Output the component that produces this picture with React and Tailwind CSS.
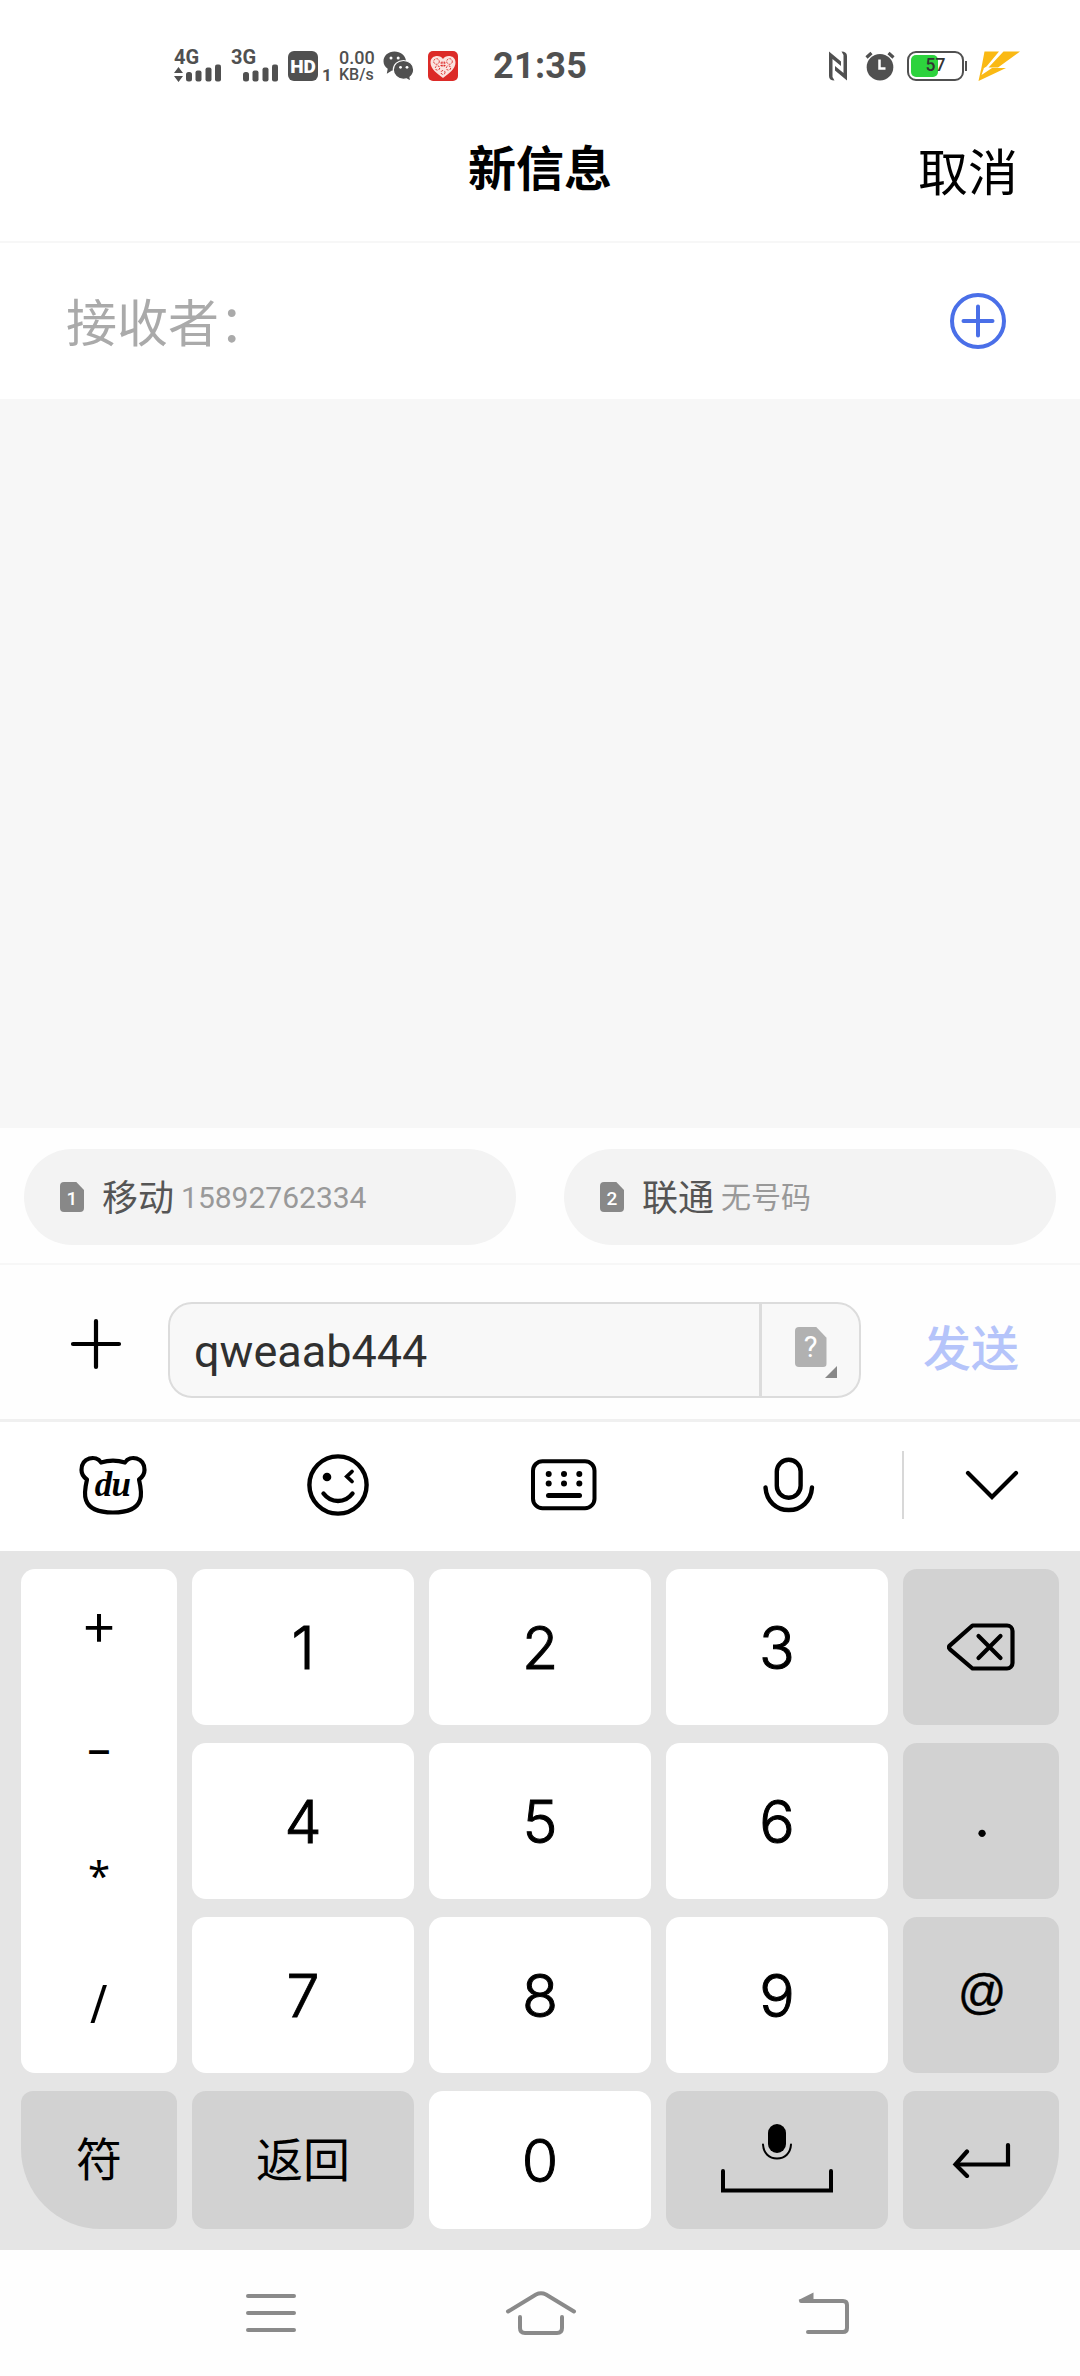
import { useState } from 'react';
import clsx from 'clsx';

function SignalBars() {
  return (
    <svg width="36" height="18" viewBox="0 0 36 18" fill="#505050">
      <rect x="0" y="8" width="6" height="9.5" rx="2.5" />
      <rect x="9.5" y="6.5" width="6" height="11" rx="2" />
      <rect x="19.5" y="3.5" width="6" height="14" rx="2" />
      <rect x="29" y="0.5" width="6" height="17" rx="2" />
    </svg>
  );
}

function DataArrows() {
  return (
    <svg width="9" height="15" viewBox="0 0 9 15" fill="#505050">
      <path d="M4.5 0 9 6H0zM4.5 15 0 9h9z" />
    </svg>
  );
}

function WechatIcon() {
  return (
    <svg width="31" height="31" viewBox="0 0 31 31">
      <path d="M11.5.5C5.200.5.5 4.800.5 10.200c0 3.200 1.600 5.800 4.200 7.600L3.800 22.800l5.200-3.200h3.500L23 9.500C22 4 17.500.5 11.500.5z" fill="#505050" />
      <circle cx="8" cy="7" r="1.500" fill="#fff" />
      <circle cx="15.200" cy="7" r="1.500" fill="#fff" />
      <path d="M20.500 9.500c5.700 0 10.200 4 10.200 9.300 0 3-1.500 5.600-3.700 7.300l.7 4.200-4.200-2.400c-1 .3-2 .4-3 .4-5.700 0-10.200-4.200-10.200-9.500s4.500-9.300 10.200-9.300z" fill="#505050" stroke="#fff" strokeWidth="1.200" />
      <circle cx="17.500" cy="16.300" r="1.400" fill="#fff" />
      <circle cx="24" cy="16.300" r="1.400" fill="#fff" />
    </svg>
  );
}

function HeartAppIcon() {
  return (
    <svg width="30" height="30" viewBox="0 0 30 30">
      <rect width="30" height="30" rx="5" fill="#dc2b28" />
      <path d="M15 8C12.500 3.500 2.500 4 2.500 11.500 2.500 18 9 22.500 15 27 21 22.500 27.500 18 27.500 11.500 27.500 4 17.500 3.500 15 8z" fill="#fbe3df" />
      <g fill="none" stroke="#dc2b28" strokeWidth="1" strokeDasharray="2 1.200">
        <circle cx="8.500" cy="10.500" r="2.800" />
        <circle cx="21.500" cy="10.500" r="2.800" />
        <circle cx="9.500" cy="17" r="2.200" />
        <circle cx="20.500" cy="17" r="2.200" />
        <circle cx="15" cy="21.500" r="2" />
        <path d="M12.500 12h5M12.500 14.500h5M14 10.500v5.500M16.200 10.500v5.500" />
      </g>
    </svg>
  );
}

function NfcIcon() {
  return (
    <svg width="18" height="30" viewBox="0 0 18 30" fill="#505050">
      <path d="M0 .5 12 10.500v4.500L3.500 8v18L5.500 29.500C2 29.500 0 28 0 25zM18 29.500 6 19.500V15l8.500 7V4L12.500.5C16 .5 18 2 18 5z" />
    </svg>
  );
}

function AlarmIcon() {
  return (
    <svg width="30" height="30" viewBox="0 0 30 30">
      <circle cx="15" cy="16.200" r="13.300" fill="#505050" />
      <path d="M1.500 6.500 6.500 2M28.500 6.500 23.500 2" stroke="#505050" strokeWidth="3.200" />
      <path d="M14.500 8.500v9h6" fill="none" stroke="#fff" strokeWidth="2.500" />
    </svg>
  );
}

function BoltIcon() {
  return (
    <svg width="43" height="31" viewBox="0 0 43 31" fill="#fab914">
      <path d="M6.500.5H21L8.500 15.500 3 19zM25.500.5H42L20 16.500H10.500z" />
      <path d="M3 18.500 6 17 3.500 24 14 17H28L.5 30z" />
    </svg>
  );
}

function SimIcon({ label, large }) {
  return (
    <div
      className={clsx(
        'flex items-center justify-center text-white [clip-path:polygon(0_0,68%_0,100%_27%,100%_100%,0_100%)]',
        large ? 'h-10 w-8 rounded bg-[#b1b1b1] text-[29px]' : 'h-[30px] w-6 rounded bg-[#888] text-[19px] font-medium'
      )}
    >
      <span className="pt-0.5">{label}</span>
    </div>
  );
}

function StatusBar() {
  return (
    <div className="flex h-[132px] items-center pl-[174px] leading-none text-[#505050]">
      <div className="h-8 w-[57px]">
        <div className="h-[17px] text-[20px] leading-[14px] font-bold">4G</div>
        <div className="-mt-[3px] flex items-end gap-[3px]">
          <DataArrows />
          <SignalBars />
        </div>
      </div>
      <div className="h-8 w-[57px]">
        <div className="h-[17px] text-[20px] leading-[14px] font-bold">3G</div>
        <div className="-mt-[3px] pl-3">
          <SignalBars />
        </div>
      </div>
      <div className="flex h-[30px] w-[30px] items-center justify-center rounded-md bg-[#505050] text-[19px] font-black text-white">
        HD
      </div>
      <span className="mt-[18px] ml-[4px] w-[17px] text-[17px] font-bold">1</span>
      <div className="w-[44px] font-medium">
        <div className="text-[18px] leading-[17px]">0.00</div>
        <div className="text-[16px] leading-[17px]">KB/s</div>
      </div>
      <WechatIcon />
      <div className="ml-3.5">
        <HeartAppIcon />
      </div>
      <span className="ml-[35px] text-[36px] font-bold tracking-[0.3px]">21:35</span>
      <div className="ml-auto flex items-center pr-[59px]">
        <NfcIcon />
        <div className="ml-[18px]">
          <AlarmIcon />
        </div>
        <div className="ml-3 flex items-center">
          <div className="relative h-[30px] w-[57px] rounded-[9px] border-2 border-[#505050] p-0.5">
            <div className="h-full w-[27px] rounded-[5px] bg-[#2dd33d]" />
            <span className="absolute inset-0 flex items-center justify-center text-[17.5px] font-medium text-[#333]">57</span>
          </div>
          <div className="ml-px h-2.5 w-0.5 bg-[#505050]" />
        </div>
        <div className="ml-[11px]">
          <BoltIcon />
        </div>
      </div>
    </div>
  );
}

function BearIcon() {
  return (
    <div className="relative">
      <svg width="68" height="60" viewBox="0 0 68 60" fill="none" stroke="#000" strokeWidth="4.200" strokeLinejoin="round">
        <path d="M22 7.500C17-.5 2.500 2.500 2.500 15c0 4.500 2.500 7.500 5.500 9.500C6 33 5.500 41 7 45c3 9 14 12.500 27 12.500S58 54 61 45c1.500-4 1-12-1-20.500 3-2 5.500-5 5.500-9.500C65.500 2.500 51 -.5 46 7.500c-8-2.600-16-2.600-24 0z" />
      </svg>
      <span className="absolute top-[12px] left-[16px] font-['Liberation_Serif',serif] text-[35px] leading-none font-bold italic tracking-tight">
        du
      </span>
    </div>
  );
}

function WinkIcon() {
  return (
    <svg width="62" height="62" viewBox="0 0 62 62" fill="none" stroke="#000" strokeWidth="4.400" strokeLinecap="round">
      <circle cx="31" cy="31" r="28.600" />
      <circle cx="20" cy="23" r="4.300" fill="#000" stroke="none" />
      <path d="M45 17.500 39.800 22.500 45 27.500" strokeWidth="3.800" />
      <path d="M16.500 39.500c7.500 10 21.500 10 29 0" />
    </svg>
  );
}

function KeyboardIcon() {
  return (
    <svg width="66" height="52" viewBox="0 0 66 52" fill="#000">
      <rect x="2" y="2.200" width="61.500" height="47" rx="9.500" fill="none" stroke="#000" strokeWidth="4" />
      {[17.700, 33, 48.300].map((x) => (
        <g key={x}>
          <circle cx={x} cy="15" r="3" />
          <circle cx={x} cy="24.500" r="3" />
        </g>
      ))}
      <rect x="15" y="34" width="36" height="5" rx="2.500" />
    </svg>
  );
}

function MicIcon() {
  return (
    <svg width="52" height="56" viewBox="0 0 52 56" fill="none" stroke="#000" strokeWidth="4.400" strokeLinecap="round">
      <rect x="13.800" y="2.700" width="23.800" height="38" rx="11.900" />
      <path d="M2.500 30.500C3.500 44 13 53 25.800 53S48 44 49 30.500" />
    </svg>
  );
}

function BackspaceIcon() {
  return (
    <svg width="68" height="48" viewBox="0 0 68 48" fill="none" stroke="#000" strokeWidth="4.200" strokeLinejoin="round" strokeLinecap="round">
      <path d="M25.500 2.500H60a5.500 5.500 0 0 1 5.500 5.500v32a5.500 5.500 0 0 1-5.500 5.500H25.500L3 26.300q-2-2 0-4z" />
      <path d="M31.500 13 53.500 35M53.500 13 31.500 35" />
    </svg>
  );
}

function SpaceIcon() {
  return (
    <svg width="114" height="70" viewBox="0 0 114 70" fill="none" stroke="#000" className="mb-[3px]">
      <rect x="48" y="0" width="18" height="29" rx="9" fill="#000" stroke="none" />
      <path d="M43 20.500C43.500 29 49 34.500 57 34.500S70.500 29 71 20.500" strokeWidth="2" strokeLinecap="round" />
      <path d="M3 47v19.500h108V47" strokeWidth="4" strokeLinecap="round" />
    </svg>
  );
}

function EnterIcon() {
  return (
    <svg width="60" height="36" viewBox="0 0 60 36" fill="none" stroke="#000" strokeWidth="4.200" strokeLinecap="round" className="ml-0.5">
      <path d="M56 3v19.500H4" />
      <path d="M15 9.500 3.500 22.500 15 34" />
    </svg>
  );
}

function Key({ children, gray, className }) {
  return (
    <button
      className={clsx(
        'flex items-center justify-center text-black',
        gray ? 'bg-[#d2d2d2]' : 'bg-white',
        className || 'rounded-[14px]'
      )}
    >
      {children}
    </button>
  );
}

function Digit({ value }) {
  return (
    <Key>
      <span className="font-['Inter',sans-serif] text-[59px] leading-none font-light [-webkit-text-stroke:1px_#000]">{value}</span>
    </Key>
  );
}

function Keypad() {
  return (
    <div className="grid h-[699px] grid-cols-[156px_222px_222px_222px_156px] grid-rows-[156px_156px_156px_138px] gap-x-[15px] gap-y-[18px] bg-[#e5e5e5] px-[21px] pt-[18px]">
      <div className="row-span-3 flex flex-col items-center rounded-[14px] bg-white pt-7 font-['Noto_Sans',sans-serif] leading-none">
        <span className="font-['Noto_Sans_CJK_SC',sans-serif] text-[55px] leading-none">+</span>
        <span className="mt-[72px] text-[47px] leading-none">–</span>
        <span className="mt-[84px] text-[40px] leading-none">*</span>
        <span className="mt-[82px] scale-x-90 text-[52px] leading-none">/</span>
      </div>
      <Digit value="1" />
      <Digit value="2" />
      <Digit value="3" />
      <Key gray>
        <BackspaceIcon />
      </Key>
      <Digit value="4" />
      <Digit value="5" />
      <Digit value="6" />
      <Key gray>
        <span className="pb-2 pl-0.5 font-['Inter',sans-serif] text-[56px] leading-none">.</span>
      </Key>
      <Digit value="7" />
      <Digit value="8" />
      <Digit value="9" />
      <Key gray>
        <span className="pb-[7px] pl-0.5 font-['Liberation_Sans',sans-serif] text-[48px] leading-none [-webkit-text-stroke:0.4px_#000]">@</span>
      </Key>
      <Key gray className="rounded-[12px] rounded-bl-[80px]">
        <span className="text-[46px] leading-none">符</span>
      </Key>
      <Key gray>
        <span className="text-[47px] leading-none">返回</span>
      </Key>
      <Digit value="0" />
      <Key gray>
        <SpaceIcon />
      </Key>
      <Key gray className="rounded-[12px] rounded-br-[80px]">
        <EnterIcon />
      </Key>
    </div>
  );
}

function NavBar() {
  return (
    <div className="flex h-[126px] items-center bg-[#fefefe] pl-[246px] text-[#8a8a8a]">
      <svg width="50" height="40" viewBox="0 0 50 40" stroke="currentColor" strokeWidth="4" strokeLinecap="round">
        <path d="M2 3h46M2 20h46M2 37h46" />
      </svg>
      <svg width="72" height="44" viewBox="0 0 72 44" fill="none" stroke="currentColor" strokeWidth="4" strokeLinecap="round" className="ml-[209px]">
        <path d="M3 20.500 31 3.500q5-2.500 10 0l28 17" />
        <path d="M15 26v11q0 5 5 5h32q5 0 5-5V26" />
      </svg>
      <svg width="52" height="42" viewBox="0 0 52 42" fill="none" stroke="currentColor" strokeWidth="4" strokeLinecap="round" className="ml-[221px]">
        <path d="M3 9h42q4 0 4 4v23q0 4-4 4H10" />
        <path d="M.5 8 15.500.5V9H2z" fill="currentColor" stroke="none" />
      </svg>
    </div>
  );
}

const sims = [
  { slot: '1', carrier: '移动', number: '15892762334' },
  { slot: '2', carrier: '联通', number: '无号码' },
];

export default function App() {
  const [message, setMessage] = useState('qweaab444');

  return (
    <div className="flex h-[2376px] w-[1080px] flex-col overflow-hidden bg-white font-['Roboto','Noto_Sans_CJK_SC',sans-serif]">
      <StatusBar />

      {/* Title */}
      <div className="grid h-[111px] grid-cols-3 border-b-2 border-[#f7f7f7] px-[62px] text-black">
        <h1 className="col-start-2 pt-[14px] text-center text-[48px] leading-[48px] font-bold">新信息</h1>
        <button className="self-start pt-[17px] text-right text-[50px] leading-[50px]">取消</button>
      </div>

      {/* Recipient */}
      <div className="flex h-[156px] items-center justify-between pr-[73px] pl-[66px]">
        <span className="pt-1.5 text-[51px] leading-none text-[#aaa]">接收者：</span>
        <svg width="58" height="58" viewBox="0 0 58 58" fill="none" stroke="#4a6fe8" strokeWidth="4" strokeLinecap="round">
          <circle cx="29" cy="29" r="26" />
          <path d="M14.500 29h29M29 14.500v29" />
        </svg>
      </div>

      <div className="h-[729px] bg-[#f7f7f7]" />

      {/* SIM choice */}
      <div className="flex h-[137px] gap-12 border-b-2 border-[#f7f7f7] bg-[#fefefe] px-6 pt-[21px]">
        {sims.map((sim) => (
          <button key={sim.slot} className="flex h-24 flex-1 items-center rounded-full bg-[#f3f3f3] pl-9 leading-none">
            <SimIcon label={sim.slot} />
            <span className="ml-[18px] pt-1 text-[36px] text-[#555]">{sim.carrier}</span>
            <span className="ml-[7px] pt-0.5 text-[30px] text-[#999]">{sim.number}</span>
          </button>
        ))}
      </div>

      {/* Compose */}
      <div className="flex h-[157px] border-b-[3px] border-[#f0f0f0] bg-[#fefefe] pt-[37px] pl-[70px]">
        <svg width="52" height="52" viewBox="0 0 52 52" stroke="#000" strokeWidth="4.200" strokeLinecap="round" className="mt-4">
          <path d="M3 26h46M26 3v46" />
        </svg>
        <div className="ml-[46px] flex h-24 w-[693px] rounded-[24px] border-2 border-[#dcdcdc] bg-[#f8f8f8]">
          <input
            value={message}
            onChange={(e) => setMessage(e.target.value)}
            className="w-[592px] border-r-[3px] border-[#dcdcdc] pt-1 pl-[24px] text-[45px] text-[#303030] outline-none"
          />
          <div className="relative flex flex-1 items-center justify-center pb-1.5">
            <SimIcon label="?" large />
            <div className="absolute right-[22px] bottom-[18px] h-3 w-3 bg-[#888] [clip-path:polygon(100%_0,100%_100%,0_100%)]" />
          </div>
        </div>
        <button className="ml-[62px] self-start pt-[24px] text-[48px] leading-[48px] font-medium text-[#b5c4fa]">发送</button>
      </div>

      {/* Keyboard toolbar */}
      <div className="flex h-[129px] items-center pb-[3px]">
        <div className="grid w-[902px] grid-cols-4 place-items-center">
          <BearIcon />
          <WinkIcon />
          <KeyboardIcon />
          <MicIcon />
        </div>
        <div className="h-[68px] w-0.5 bg-[#d8d8d8]" />
        <div className="flex flex-1 justify-center pt-0.5">
          <svg width="54" height="32" viewBox="0 0 54 32" fill="none" stroke="#000" strokeWidth="4.200" strokeLinecap="round">
            <path d="M3 3l24 24L51 3" />
          </svg>
        </div>
      </div>

      <Keypad />
      <NavBar />
    </div>
  );
}
